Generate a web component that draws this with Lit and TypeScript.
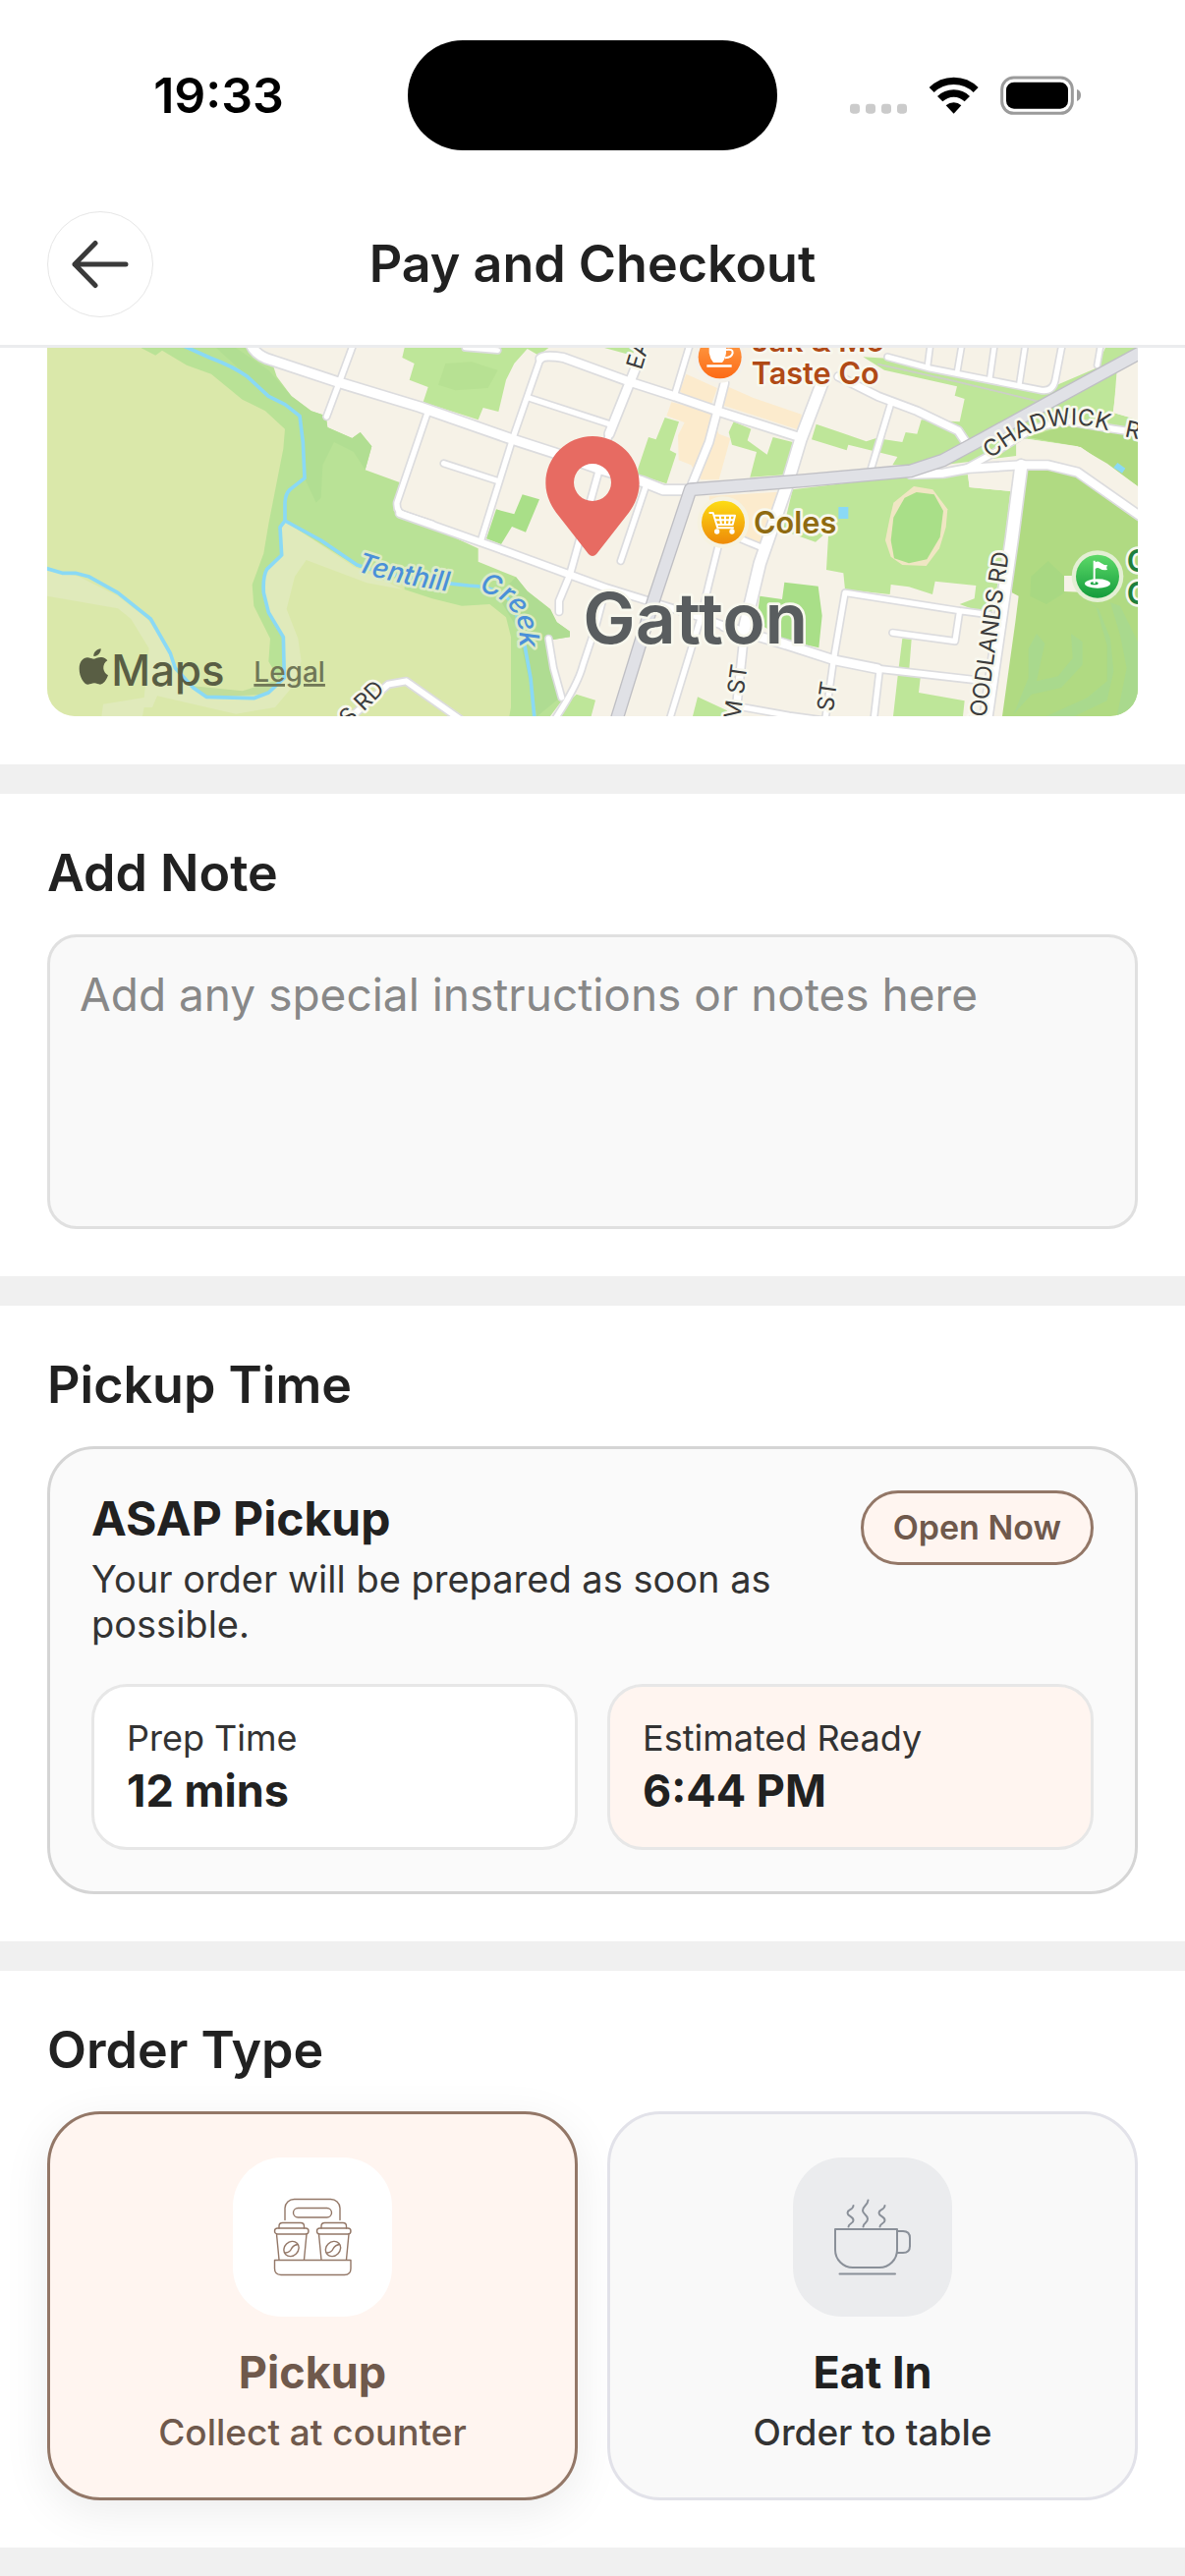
import { LitElement, html, svg, css } from "lit"
import { customElement, property, state } from "lit/decorators.js"

/* MAP DATA */

const LAND: [string, string][] = [
	// creek reserve
	["#b9e296", "310,42 650,42 715,100 725,130 770,190 830,235 875,250 880,285 955,318 980,300 1015,343 995,415 1100,453 1082,540 1200,590 1340,655 1340,695 1455,742 1490,785 1560,840 1580,880 1620,908 1620,925 1555,935 1595,1120 1560,1167 700,1167 600,600"],
	["#b1de92", "540,42 600,42 700,110 770,190 830,235 875,250 880,285 955,318 980,300 1015,343 995,415 960,360 900,330 865,400 860,500 845,515 810,440 795,250 690,180"],
	["#afdc92", "1455,742 1490,785 1560,840 1580,880 1620,908 1620,925 1555,935 1590,1110 1520,1167 1460,900 1400,800"],
	// farms
	["#dae8aa", "24,42 310,42 355,65 375,50 450,95 525,122 620,200 690,235 750,290 745,350 700,580 685,670 650,765 655,830 705,930 700,1000 735,1060 735,1167 24,1167"],
	["#dae8aa", "750,575 810,610 970,710 1115,755 1115,780 1200,808 1290,830 1375,825 1425,865 1440,925 1440,1140 1435,1167 700,1167 745,1060 745,925 685,790 690,720 740,675"],
	["#e0eabb", "755,575 960,710 1110,780 1000,760 815,690 780,740 755,840 790,930 800,1000 770,1080 720,1140 600,1160 360,1105 345,1140 320,1140 315,1167 190,1167 195,1130 320,1110 335,960 280,870 240,838 24,800 24,720 120,740 240,800 330,870 400,970 430,1040 510,1110 660,1115 745,1040 745,920 690,830 685,730 740,675 735,590"],
	["#c1dd9b", "470,1075 620,1090 715,1060 745,1050 700,1100 510,1108"],
	// town greens
	["#bee699", "1115,42 1108,72 1145,90 1130,140 1187,162 1172,208 1340,262 1355,225 1402,237 1425,140 1450,90 1490,45 1525,65 1555,42"],
	["#b7e193", "1240,90 1320,85 1400,110 1370,165 1270,172 1218,155"],
	["#bee699", "1725,42 1820,42 1810,65"],
	["#a9df88", "1395,535 1450,550 1475,490 1527,505 1485,605 1443,588 1410,642 1365,625"],
	["#bee699", "1910,255 1953,268 1925,355 1945,365 1915,457 1828,430 1828,410 1860,315 1883,322"],
	["#bee699", "2120,268 2173,290 2162,325 2222,368 2240,315 2300,330 2275,430 2170,437 2190,360 2115,338 2105,300"],
	["#fcebcd", "1975,122 2070,165 2045,235 2075,305 2110,318 2075,445 2020,445 1990,400 1952,385 1950,310 1970,270 1915,250 1930,208 2045,235 1955,175"],
	["#fcebcd", "2100,160 2180,195 2327,245 2325,295 2080,215"],
	["#fcebcd", "2045,495 2260,482 2220,640 2140,625 2050,560"],
	["#bee699", "2300,475 2680,430 2835,430 2840,468 2965,480 2940,700 2905,860 2810,825 2855,808 2860,768 2735,755 2727,795 2655,772 2600,765 2597,795 2460,780 2455,730 2403,720 2410,600 2370,635 2270,600"],
	["#bee699", "2515,70 2600,75 3050,180 3225,105 3255,42 3360,42 3290,110 3280,240 3354,262 3354,465 3180,345 3015,320 2983,330 2983,372 2760,400 2605,400 2620,375 2470,338 2465,355 2358,322 2372,275 2445,300 2525,328 2555,318 2635,330 2645,300 2680,305 2693,262 2810,268 2825,198 2795,188 2802,160 2580,110"],
	["#f6f2e7", "3295,110 3354,80 3354,262 3278,240"],
	["#b0da82", "3020,315 3130,280 3354,290 3354,465 3180,345"],
	["#f6f2e7", "2983,318 3015,320 3170,343 3260,395 3354,465 3354,560 3170,430 3080,400 2983,375"],
	["#f6f2e7", "2835,430 2970,415 2965,480 2840,468"],
	["#b0da82", "3015,400 3080,400 3170,430 3354,560 3354,1167 2940,1167 2980,880 2990,800 2970,790 2970,640"],
	["#a9df88", "2275,758 2378,770 2390,860 2380,958 2280,935 2190,880 2200,800 2268,810"],
	["#bee699", "2635,930 2663,932 2655,1035 2690,1050 2685,1095 2825,1120 2820,1167 2607,1167 2622,1035"],
	["#bee699", "1640,1100 1698,1118 1685,1167 1570,1167"],
	["#bee699", "2010,1108 2100,1150 2100,1167 1995,1167"],
	// sports oval
	["#f0e6c3", "2670,465 2728,475 2773,535 2768,590 2748,655 2708,708 2635,705 2600,680 2583,630 2595,570 2608,515"],
	["#a9df88", "2678,483 2732,490 2760,540 2750,620 2710,688 2655,700 2610,685 2600,630 2608,560 2642,500"],
	// golf course
	["#a8d882", "3080,693 3130,740 3130,790 3075,825 3025,800 3028,740"],
	["#f6f2e7", "3129,738 3180,738 3180,788 3129,786"],
	["#a9d98d", "3045,915 3070,945 3045,1060 3110,1045 3155,990 3150,915 3185,940 3185,1010 3120,1080 3030,1100 2975,1160 3020,1050 3020,960"],
	["#a9d98d", "3190,810 3225,830 3260,950 3260,1060 3200,1110 3075,1167 3160,1167 3260,1120 3280,1030 3270,930 3235,840"],
	["#a9d98d", "3270,820 3300,830 3354,940 3354,1130 3290,1167 3320,1020 3300,920"],
	// pools
	["#8ad9f5", "2440,528 2470,528 2470,564 2440,564"],
	["#8ad9f5", "3292,393 3316,410 3306,425 3280,408"],
]

const CREEKS = [
	"M440,36 L520,72 Q590,98 635,130 L700,190 L750,215 L795,250 L805,330 L810,440 L765,475 Q750,490 750,520 V570 L735,590 L740,675 L695,718 Q682,740 685,790 L700,850 L745,925 L748,1050 L700,1095 L655,1112 L510,1108 L470,1080 L415,1020 L400,975 L340,870 L240,790 L150,740 L110,730 H70 L20,715",
	"M750,570 L860,630 L970,705 Q1080,745 1310,768 Q1410,770 1450,830 L1480,940 L1500,1050 L1512,1175",
]

const ROADS: [number, string][] = [
	[16, "M957,36 L915,150 L877,252"],
	[16, "M1495,195 L1750,278"],
	[16, "M1235,395 L1395,447"],
	[16, "M1850,470 L1775,693"],
	[16, "M1985,36 L1940,185"],
	[16, "M2075,640 L2045,760 L2020,865 L1925,1175"],
	[16, "M2140,625 L2205,652"],
	[16, "M1730,775 L1700,890 L1660,1010 Q1645,1070 1575,1175"],
	[16, "M1555,930 L1570,1020 L1595,1110"],
	[18, "M945,1175 L1065,1070 L1120,1060 L1290,1180"],
	[16, "M2150,1140 L2290,1165 L2400,1180"],
	[16, "M1530,75 L1490,190 L1445,320 L1348,632"],
	[14, "M2720,36 L2712,98 M2816,36 L2802,118 M2916,36 L2902,135 M3010,36 L2992,155 M3240,36 L3230,95 M1300,42 L1400,50"],
	[16, "M2590,70 L2720,105 L3060,172 Q3095,176 3102,140 L3122,36"],
	[16, "M2602,205 L2540,410"],
	[22, "M2440,130 L2560,190 L2680,235 L2805,295 L2835,340"],
	[16, "M2425,995 L2460,790 L2810,845 L2900,857 M2810,845 L2796,938 L2605,912 M2565,1030 L2548,1175 M2425,995 L2400,1175"],
	[18, "M2830,410 L2920,360 L3030,290 L3130,265 L3280,290 L3360,302"],
	[16, "M1187,235 L1092,515 Q1090,545 1115,552 L1200,580"],
	[20, "M1100,548 L1430,665 L1620,735 L1730,775 L2030,868 L2100,895"],
	[26, "M2090,892 L2280,948 L2425,995 L2560,1022"],
	[18, "M2540,1020 L2890,1060"],
	[24, "M1530,75 Q1540,62 1600,72 L1800,145 L1940,190 L2070,235 L2330,318"],
	[26, "M1830,80 L1790,180 L1740,305"],
	[18, "M1740,305 L1705,430 L1620,735 L1587,815 V848"],
	[22, "M2092,150 L2070,235 L2045,330 L1992,460"],
	[28, "M645,30 Q660,66 710,80 L915,148 L1160,222 L1440,320 L1570,362 L1710,412 L1840,450 L1905,476 H1985"],
	[24, "M2660,428 L2760,425 L2840,410 L3000,400 H3080 L3170,422 L3360,555"],
	[34, "M2390,150 L2325,320 L2280,470 L2200,700 L2155,890"],
	[22, "M2155,890 L2125,1175"],
	[36, "M2998,402 L2970,620 L2930,900 L2890,1175"],
]

const HIGHWAY = "M1762,1180 L1875,815 L1988,475 L2340,447 L2660,418 L2760,385 L2880,320 L3080,210 L3370,52"

@customElement("town-map")
export class TownMap extends LitElement {

	static styles = css`
:host {
	display: block;
}
.map {
	display: block;
	width: 100%;
	height: 375px;
	border-radius: 0 0 28px 28px;
	background-color: #f6f2e7;
	font-family: Inter, "Liberation Sans", sans-serif;
}
.creek {
	fill: none;
	stroke: #8ad9f5;
	stroke-width: 11px;
	stroke-linejoin: round;
}
.casing, .road, .highway {
	fill: none;
	stroke-linecap: round;
	stroke-linejoin: round;
}
.casing { stroke: #dcdcde; }
.road { stroke: #ffffff; }
.highway { stroke: #bfbfc4; stroke-width: 42px; }
.highway.inner { stroke: #e0e1e6; stroke-width: 34px; }
.railway {
	fill: none;
	stroke: #cccfc6;
	stroke-width: 5px;
}
.label {
	paint-order: stroke;
	stroke: #f8f8ee;
	stroke-width: 16px;
	stroke-linejoin: round;
}
.street {
	font-size: 70px;
	font-weight: 400;
	fill: #3c3c3c;
}
.water {
	font-size: 84px;
	font-style: italic;
	font-weight: 500;
	fill: #4a90d9;
	stroke: #dcebc6;
}
.town {
	font-size: 214px;
	font-weight: 600;
	fill: #595d5f;
}
.poi {
	font-size: 92px;
	font-weight: 600;
}
.food { fill: #b04a16; }
.shop { fill: #8f6a10; }
.golf { fill: #1e7f3c; }
.brand {
	font-size: 131px;
	font-weight: 500;
	fill: #595e44;
}
.legal {
	font-size: 84px;
	font-weight: 500;
	fill: #707757;
	text-decoration: underline;
}
`

	render() {
		return html`
		<svg class="map" viewBox="24 42 3330 1125" preserveAspectRatio="xMidYMid slice" role="img" aria-label="Map of Gatton">
			<defs>
				<path id="creek-a" d="M966,722 Q1120,775 1330,795" />
				<path id="creek-b" d="M1342,786 Q1425,800 1458,870 Q1470,905 1466,1000" />
				<path id="chadwick" d="M2906,382 Q3080,225 3290,304" />
				<linearGradient id="orange" x2="0" y2="1"><stop stop-color="#ffa14a" /><stop offset="1" stop-color="#fc6a16" /></linearGradient>
				<linearGradient id="yellow" x2="0" y2="1"><stop stop-color="#fddc14" /><stop offset="1" stop-color="#ee8a08" /></linearGradient>
				<linearGradient id="green" x2="0" y2="1"><stop stop-color="#5cd968" /><stop offset="1" stop-color="#149c3c" /></linearGradient>
			</defs>
			${LAND.map(([fill, points]) => svg`<polygon fill=${fill} points=${points} />`)}
			${CREEKS.map((d) => svg`<path class="creek" d=${d} />`)}
			<path class="railway" d="M2560,92 L2800,145 L3060,208" />
			<path class="railway" stroke-dasharray="5 22" d="M2560,92 L2800,145 L3060,208" />
			${ROADS.map(([width, d]) => svg`<path class="casing" stroke-width=${width + 10} d=${d} />`)}
			${ROADS.map(([width, d]) => svg`<path class="road" stroke-width=${width} d=${d} />`)}
			<path class="highway" d=${HIGHWAY} />
			<path class="highway inner" d=${HIGHWAY} />

			<text class="label street" transform="translate(1838 112) rotate(-73)">EAST</text>
			<text class="label street"><textPath href="#chadwick">CHADWICK</textPath></text>
			<text class="label street" transform="translate(3312 312) rotate(12)">RD</text>
			<text class="label street" transform="translate(2880 1240) rotate(-82)">WOODLANDS RD</text>
			<text class="label street" transform="translate(2138 1184) rotate(-82)">M ST</text>
			<text class="label street" transform="translate(2423 1154) rotate(-82)">ST</text>
			<text class="label street" transform="translate(944 1200) rotate(-45)">S RD</text>
			<text class="label water"><textPath href="#creek-a">Tenthill</textPath></text>
			<text class="label water"><textPath href="#creek-b">Creek</textPath></text>
			<text class="label town" x="1660" y="944">Gatton</text>

			<text class="label poi food" x="2174" y="55">Jak &amp; Mo</text>
			<text class="label poi food" x="2174" y="152">Taste Co</text>
			<circle cx="2078" cy="70" r="79" fill="#f4f1ea" />
			<circle cx="2078" cy="70" r="66" fill="url(#orange)" />
			<path fill="#fff" d="M2045,36 H2097 V58 Q2094,78 2085,87 H2058 Q2048,76 2045,58 Z M2038,94 H2114 V101 H2038 Z" />
			<path fill="none" stroke="#fff" stroke-width="6" d="M2097,48 Q2118,44 2117,58 Q2114,72 2094,73" />

			<text class="label poi shop" x="2181" y="610">Coles</text>
			<circle cx="2088" cy="575" r="79" fill="#f6f2e0" />
			<circle cx="2088" cy="575" r="66" fill="url(#yellow)" />
			<path fill="none" stroke="#fff" stroke-width="6" stroke-linecap="round" stroke-linejoin="round"
				d="M2047,546 H2057 L2071,592 H2118 M2060,554 H2124 L2117,582 H2068 M2064,568 H2120 M2078,554 L2082,582 M2094,554 V582 M2110,554 L2106,582" />
			<circle cx="2069" cy="603" r="8" fill="#fff" />
			<circle cx="2115" cy="603" r="8" fill="#fff" />

			<text class="label poi golf" x="3320" y="727">C</text>
			<text class="label poi golf" x="3320" y="824">C</text>
			<circle cx="3231" cy="740" r="79" fill="#e4efd4" />
			<circle cx="3231" cy="740" r="66" fill="url(#green)" />
			<ellipse cx="3231" cy="762" rx="39" ry="14" fill="#fff" />
			<ellipse cx="3221" cy="761" rx="12" ry="5" fill="#1fa746" />
			<path fill="#fff" d="M3218,692 H3224 V697 Q3232,692 3240,698 Q3250,706 3262,706 Q3256,712 3261,720 Q3246,722 3238,716 Q3230,712 3224,717 V762 H3218 Z" />

			<path fill="#e76b62" fill-rule="evenodd"
				d="M1689,312 C1768,312 1832,376 1832,455 C1832,490 1818,520 1800,545 L1701,672 Q1689,684 1677,672 L1578,545 C1560,520 1546,490 1546,455 C1546,376 1610,312 1689,312 Z M1689,396 A57,57 0 1 0 1689,510 A57,57 0 1 0 1689,396 Z" />

			<path fill="#595e44"
				d="M165,992 C172,992 180,986 190,987 C197,987 204,991 208,997 C190,1008 193,1034 210,1042 C205,1056 196,1070 186,1070 C179,1070 176,1066 168,1066 C160,1066 156,1070 149,1070 C136,1070 122,1046 122,1022 C122,1000 134,988 147,988 C154,988 160,992 165,992 Z M166,984 C165,972 176,962 188,961 C189,973 178,985 166,984 Z" />
			<text class="brand" x="220" y="1073">Maps</text>
			<a href="#legal"><text class="legal" x="655" y="1062">Legal</text></a>
		</svg>`
	}
}

/* ICONS */

const arrowLeft = html`
<svg width="60" height="50" viewBox="0 0 60 50" fill="none" stroke="#3a3a3a" stroke-width="5" stroke-linecap="round" stroke-linejoin="round" aria-hidden="true">
	<path d="M56,25 H4 M25,3.500 L4,25 L25,46.500" />
</svg>`

const statusIcons = html`
<svg width="235" height="42" viewBox="45 49 705 126" aria-hidden="true">
	<g fill="#cbcbcb">
		<rect x="45" y="138" width="30" height="30" rx="10" />
		<rect x="93" y="138" width="30" height="30" rx="10" />
		<rect x="141" y="138" width="30" height="30" rx="10" />
		<rect x="189" y="138" width="30" height="30" rx="10" />
	</g>
	<path d="M287,88 Q318,57 362,57 Q406,57 437,88 L422,103 Q397,79 362,79 Q327,79 302,103 Z" />
	<path d="M312,115 Q333,95 362,95 Q391,95 411,115 L395,131 Q381,117 362,117 Q343,117 328,131 Z" />
	<path d="M338,143 Q349,134 362,134 Q375,134 385,143 L362,168 Z" />
	<rect x="509" y="58" width="215" height="109" rx="36" fill="none" stroke="#9b9b9b" stroke-width="9" />
	<rect x="522" y="72" width="189" height="81" rx="24" />
	<path fill="#9b9b9b" d="M738,94 Q750,98 750,111 Q750,125 738,130 Z" />
</svg>`

const cupCarrier = svg`
<path d="M11,21.500 V9.500 A9.500,9.500 0 0 1 20.500,0.500 H57.500 A9.500,9.500 0 0 1 67,9.500 V21.500" />
<rect x="19.500" y="9.500" width="39" height="9.500" rx="4.750" />
<path d="M5,30 V28 Q5,24.500 8.500,24.500 H27 Q30.500,24.500 30.500,28 V30 M48,30 V28 Q48,24.500 51.500,24.500 H70 Q73.500,24.500 73.500,28 V30" />
<rect x="0.500" y="30" width="34.500" height="6" rx="3" />
<rect x="43.500" y="30" width="34.500" height="6" rx="3" />
<path d="M2.500,36 L5,62 M33,36 L30.500,62 M45.500,36 L48,62 M76,36 L73.500,62" />
<path d="M0.500,62.500 H78 V71 Q78,77.500 71.500,77.500 H7 Q0.500,77.500 0.500,71 Z" />
<ellipse cx="17.500" cy="51" rx="8.200" ry="7" transform="rotate(-45 17.500 51)" />
<path d="M11.500,55 Q16,54.500 17.500,51 Q19,47.500 24,46.500" />
<ellipse cx="60" cy="51" rx="8.200" ry="7" transform="rotate(-45 60 51)" />
<path d="M54,55 Q58.500,54.500 60,51 Q61.500,47.500 66.500,46.500" />`

const steamingCup = svg`
<path d="M1,31 H64 V52 A18,18 0 0 1 46,70 H19 A18,18 0 0 1 1,52 Z" />
<path d="M64,33 H70 Q77,33 77,40 V48 Q77,55 70,55 H64 M5.500,76.500 H62" />
<path d="M19.500,7 C19,12 13.500,10.500 13.500,14.500 C13.500,18 19.500,18 19.500,22 C19.500,25.500 14.500,25 14.500,28.500" />
<path d="M34.500,1.500 C34,7 29,7 29,12 C29,16 34,16 34,20.500 C34,25 29.500,24.500 29.500,28.500" />
<path d="M51.500,7 C51,12 45.500,10.500 45.500,14.500 C45.500,18 51.500,18 51.500,22 C51.500,25.500 46.500,25 46.500,28.500" />`

/* ORDER OPTION */

@customElement("order-option")
export class OrderOption extends LitElement {

	static styles = css`
:host {
	display: block;
}
button {
	display: flex;
	flex-direction: column;
	align-items: center;
	box-sizing: border-box;
	width: 100%;
	padding: 44px 30px;
	border: 3px solid #e2e2e9;
	border-radius: 54px;
	background-color: #f9f9f9;
	color: #212121;
	font-family: inherit;
}
.tile {
	display: flex;
	align-items: center;
	justify-content: center;
	width: 162px;
	height: 162px;
	margin-bottom: 30px;
	border-radius: 50px;
	background-color: #ebecee;
}
.icon {
	overflow: visible;
	fill: none;
	stroke: #8a9099;
	stroke-width: 2px;
	stroke-linecap: round;
	stroke-linejoin: round;
}
.name {
	margin-bottom: 12px;
	font-size: 45px;
	font-weight: 700;
	line-height: 54px;
}
.hint {
	color: #333333;
	font-size: 37px;
	font-weight: 500;
	line-height: 44px;
}

/* selected */

:host([selected]) button {
	border-color: #937767;
	background-color: #fff5f0;
	color: #6f594c;
	box-shadow: 0 12px 48px rgba(0, 0, 0, 0.08);
}
:host([selected]) .tile {
	background-color: #ffffff;
}
:host([selected]) .icon {
	stroke: #937767;
	stroke-width: 1.4px;
}
:host([selected]) .hint {
	color: #6f594c;
}
`

	@property({ type: Boolean, reflect: true }) selected = false
	@property() name = ""
	@property() hint = ""
	@property({ attribute: false }) icon: unknown

	render() {
		return html`
		<button type="button" aria-pressed=${this.selected ? "true" : "false"}>
			<span class="tile">
				<svg class="icon" width="78" height="78" viewBox="0 0 78 78" aria-hidden="true">${this.icon}</svg>
			</span>
			<span class="name">${this.name}</span>
			<span class="hint">${this.hint}</span>
		</button>`
	}
}

/* PAGE */

@customElement("app-root")
export class AppRoot extends LitElement {

	static styles = css`
:host {
	display: flex;
	flex-direction: column;
	min-height: 100vh;
	background-color: #ffffff;
	color: #212121;
	font-family: Inter, "Liberation Sans", sans-serif;
}
h1, h2, h3, p, dl, dd {
	margin: 0;
}

/* status bar */

.status {
	display: grid;
	grid-template-columns: 1fr 376px 1fr;
	align-items: center;
	justify-items: center;
	height: 194px;
	color: #000000;
}
.time {
	padding-left: 30px;
	font-size: 50px;
	font-weight: 600;
}
.island {
	width: 100%;
	height: 112px;
	border-radius: 56px;
	background-color: #000000;
}
.signals {
	display: flex;
	padding-right: 32px;
}

/* header */

header {
	display: grid;
	grid-template-columns: 108px 1fr 108px;
	align-items: center;
	padding: 21px 48px 28px;
	border-bottom: 3px solid #ebecee;
}
.back {
	display: flex;
	align-items: center;
	justify-content: center;
	width: 108px;
	height: 108px;
	padding: 0;
	border: 1px solid #e6e6e6;
	border-radius: 50%;
	background-color: #ffffff;
}
h1 {
	font-size: 52px;
	font-weight: 600;
	line-height: 64px;
	text-align: center;
}

/* sections */

.place {
	padding: 0 48px 49px;
}
.band {
	height: 30px;
	background-color: #f0f0f0;
}
.band.last {
	flex: 1;
	height: auto;
}
section {
	padding: 48px;
}
h2 {
	margin-bottom: 30px;
	font-size: 52px;
	font-weight: 600;
	line-height: 65px;
}
textarea {
	display: block;
	box-sizing: border-box;
	width: 100%;
	height: 300px;
	padding: 30px;
	border: 3px solid #e0e0e0;
	border-radius: 30px;
	background-color: #f9f9f9;
	color: #212121;
	font-family: inherit;
	font-size: 46px;
	line-height: 56px;
	resize: none;
}
textarea::placeholder {
	color: #888888;
	opacity: 1;
}

/* pickup time */

.pickup {
	padding: 42px;
	border: 3px solid #d5d5d5;
	border-radius: 48px;
	background-color: #fafafa;
}
.pickup-head {
	display: flex;
	align-items: flex-start;
	gap: 36px;
	margin-bottom: 38px;
}
.summary {
	flex: 1;
}
h3 {
	margin-bottom: 9px;
	font-size: 48px;
	font-weight: 700;
	line-height: 58px;
}
.summary p {
	color: #333333;
	font-size: 38px;
	line-height: 46px;
}
.badge {
	padding: 13px 30px;
	border: 3px solid #937767;
	border-radius: 38px;
	background-color: #fff5f0;
	color: #6f594c;
	font-size: 34px;
	font-weight: 600;
	line-height: 44px;
}
.times {
	display: grid;
	grid-template-columns: 1fr 1fr;
	gap: 30px;
}
.slot {
	padding: 30px 33px;
	border: 3px solid #e7e7e7;
	border-radius: 36px;
	background-color: #ffffff;
}
.slot.ready {
	background-color: #fff5f0;
}
.slot dt {
	margin-bottom: 5px;
	color: #333333;
	font-size: 36px;
	line-height: 44px;
}
.slot dd {
	font-size: 45px;
	font-weight: 700;
	line-height: 54px;
}

/* order type */

.options {
	display: grid;
	grid-template-columns: 1fr 1fr;
	gap: 30px;
}
`

	@state() orderType = "Pickup"

	orderTypes = [
		{ name: "Pickup", hint: "Collect at counter", icon: cupCarrier },
		{ name: "Eat In", hint: "Order to table", icon: steamingCup },
	]

	render() {
		return html`
		<div class="status">
			<span class="time">19:33</span>
			<span class="island"></span>
			<span class="signals">${statusIcons}</span>
		</div>
		<header>
			<button class="back" type="button" aria-label="Back">${arrowLeft}</button>
			<h1>Pay and Checkout</h1>
		</header>

		<div class="place"><town-map></town-map></div>
		<div class="band"></div>

		<section>
			<h2><label for="note">Add Note</label></h2>
			<textarea id="note" placeholder="Add any special instructions or notes here"></textarea>
		</section>
		<div class="band"></div>

		<section>
			<h2>Pickup Time</h2>
			<div class="pickup">
				<div class="pickup-head">
					<div class="summary">
						<h3>ASAP Pickup</h3>
						<p>Your order will be prepared as soon as possible.</p>
					</div>
					<span class="badge">Open Now</span>
				</div>
				<dl class="times">
					<div class="slot">
						<dt>Prep Time</dt>
						<dd>12 mins</dd>
					</div>
					<div class="slot ready">
						<dt>Estimated Ready</dt>
						<dd>6:44 PM</dd>
					</div>
				</dl>
			</div>
		</section>
		<div class="band"></div>

		<section>
			<h2>Order Type</h2>
			<div class="options">
				${this.orderTypes.map((type) => html`
				<order-option
					.name=${type.name}
					.hint=${type.hint}
					.icon=${type.icon}
					?selected=${this.orderType === type.name}
					@click=${() => { this.orderType = type.name }}
				></order-option>`)}
			</div>
		</section>
		<div class="band last"></div>`
	}
}
